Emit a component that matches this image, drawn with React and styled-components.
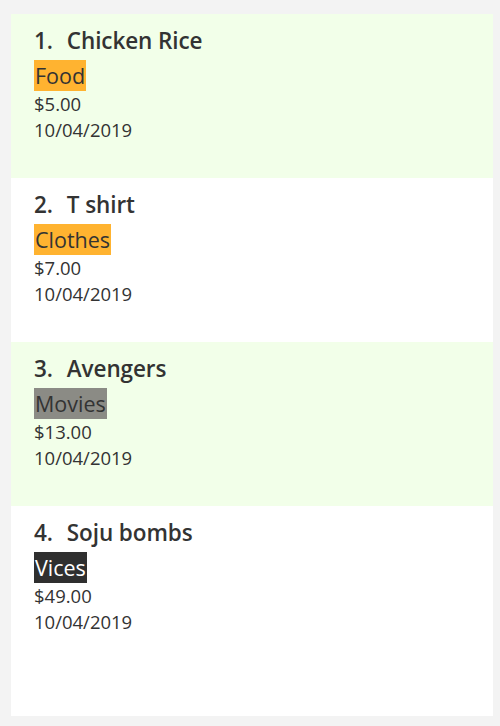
import React from "react";
import styled, { createGlobalStyle } from "styled-components";

const expenses = [
  { name: "Chicken Rice", tag: "Food", kind: "food", cost: "$5.00", date: "10/04/2019" },
  { name: "T shirt", tag: "Clothes", kind: "food", cost: "$7.00", date: "10/04/2019" },
  { name: "Avengers", tag: "Movies", kind: "movies", cost: "$13.00", date: "10/04/2019" },
  { name: "Soju bombs", tag: "Vices", kind: "vices", cost: "$49.00", date: "10/04/2019" },
];

const tagColors = {
  food: { bg: "#ffb330", fg: "#333333" },
  movies: { bg: "#8b8b85", fg: "#333333" },
  vices: { bg: "#2f2f2f", fg: "#ffffff" },
};

const App = () => {
  return (
    <>
      <GlobalStyle />
      <List>
        {expenses.map((e, i) => (
          <Card key={i} $odd={i % 2 === 0}>
            <Title>
              <Index>{i + 1}.</Index>
              {e.name}
            </Title>
            <Tag $kind={e.kind}>{e.tag}</Tag>
            <Detail>{e.cost}</Detail>
            <Detail>{e.date}</Detail>
          </Card>
        ))}
        <Filler />
      </List>
    </>
  );
};

const GlobalStyle = createGlobalStyle`
  html, body {
    margin: 0;
    padding: 0;
    background-color: #f3f3f3;
    font-family: "Open Sans", "Noto Sans", sans-serif;
  }
`;

const List = styled.div`
  margin: 14px 7px 10px 11px;
  height: 702px;
  background-color: #ffffff;
  display: flex;
  flex-direction: column;
`;

const Card = styled.div`
  height: 164px;
  box-sizing: border-box;
  padding: 13px 23px 0;
  background-color: ${(p) => (p.$odd ? "#f2ffe9" : "#ffffff")};
  color: #333333;
  display: flex;
  flex-direction: column;
  align-items: flex-start;
`;

const Title = styled.div`
  font-size: 22.5px;
  font-weight: 600;
  line-height: 28px;
  margin-bottom: 5px;
  letter-spacing: -0.1px;
`;

const Index = styled.span`
  margin-right: 14px;
`;

const Tag = styled.span`
  font-size: 21.5px;
  line-height: 31px;
  padding: 0 1px;
  background-color: ${(p) => tagColors[p.$kind].bg};
  color: ${(p) => tagColors[p.$kind].fg};
`;

const Detail = styled.div`
  font-size: 18.5px;
  line-height: 26px;
`;

const Filler = styled.div`
  flex: 1;
`;

export default App;
